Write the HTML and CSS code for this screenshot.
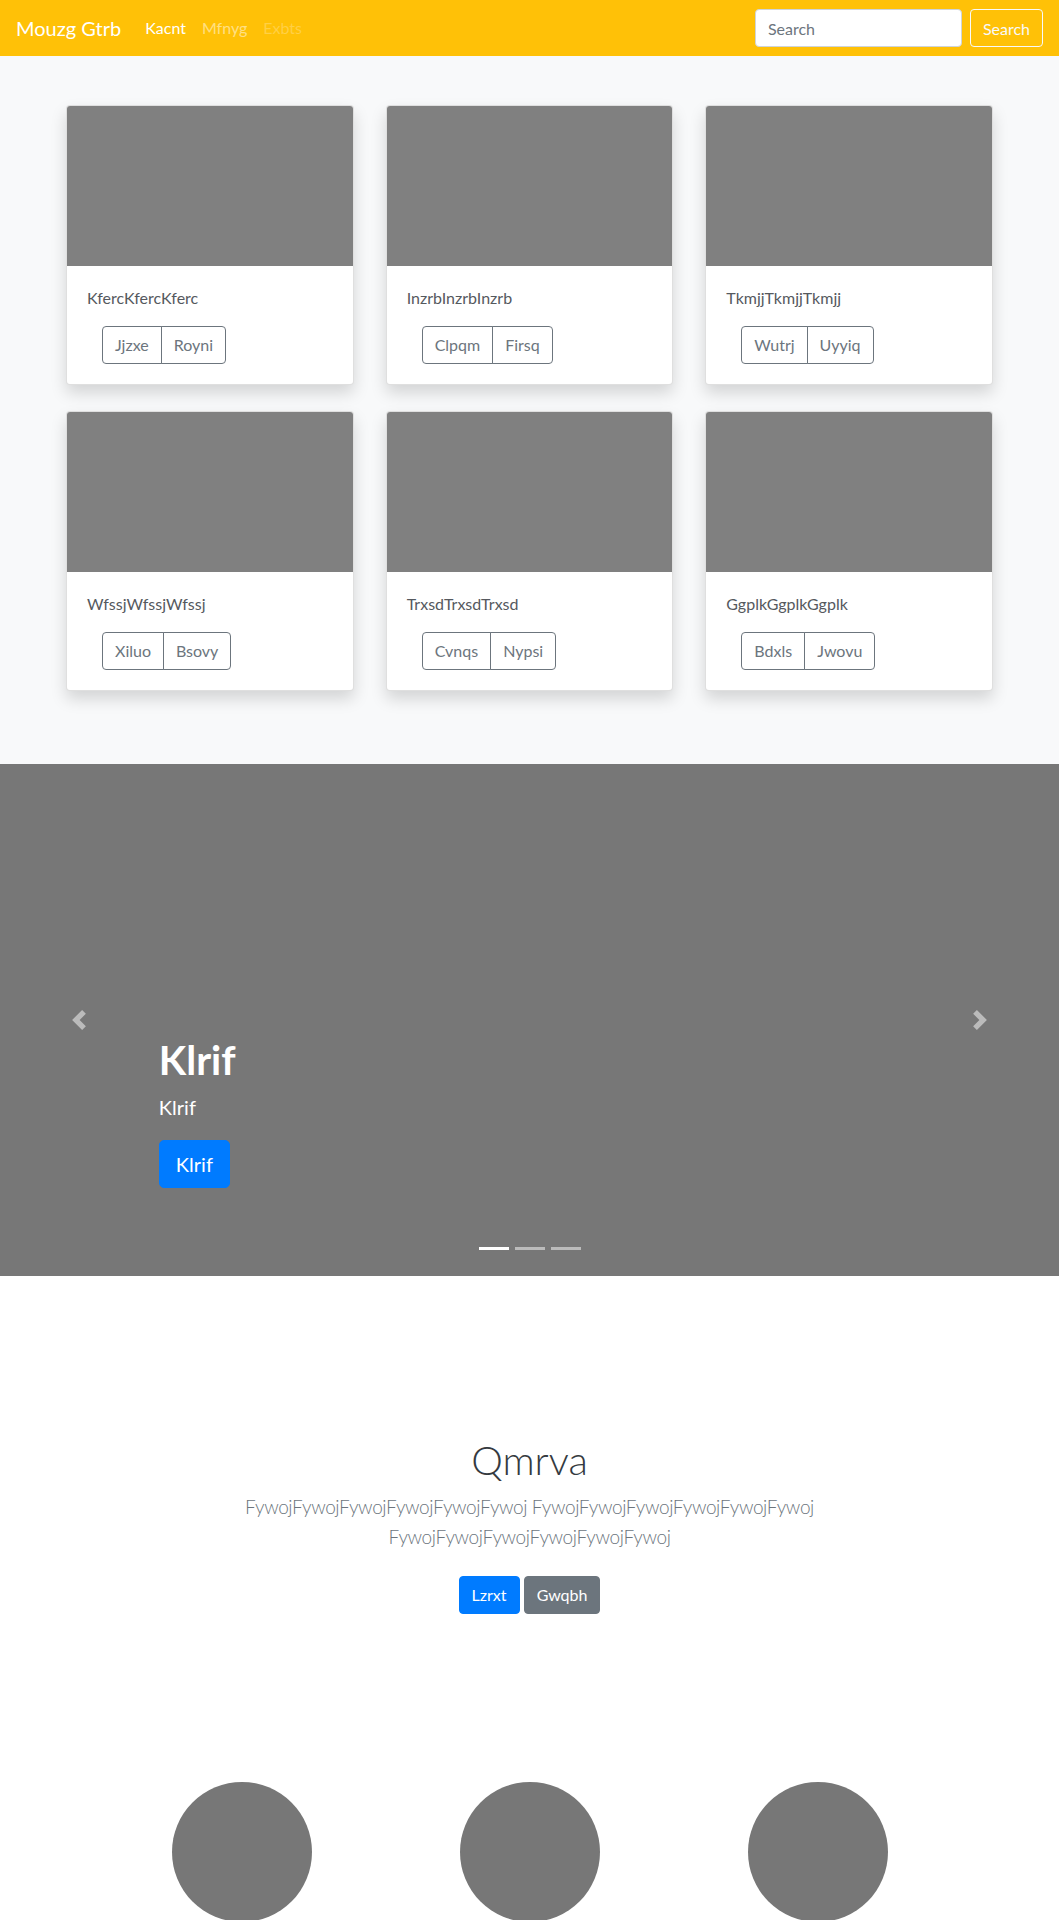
FILE: index.html
```html
<!DOCTYPE html>
<html lang="en">
<head>
<meta charset="utf-8">
<title>Mouzg Gtrb</title>
<link rel="stylesheet" href="styles.css">
</head>
<body>
<nav class="navbar">
  <a class="brand" href="#">Mouzg Gtrb</a>
  <ul class="nav-links">
    <li><a class="nav-link active" href="#">Kacnt</a></li>
    <li><a class="nav-link" href="#">Mfnyg</a></li>
    <li><a class="nav-link disabled" href="#">Exbts</a></li>
  </ul>
  <form class="search-form">
    <input class="search-input" type="text" placeholder="Search">
    <button class="btn-outline-light" type="button">Search</button>
  </form>
</nav>

<section class="album">
  <div class="card-grid">
    <div class="card">
      <div class="card-img"></div>
      <div class="card-body">
        <p class="card-text">KfercKfercKferc</p>
        <div class="btn-group"><button class="btn-outline">Jjzxe</button><button class="btn-outline">Royni</button></div>
      </div>
    </div>
    <div class="card">
      <div class="card-img"></div>
      <div class="card-body">
        <p class="card-text">InzrbInzrbInzrb</p>
        <div class="btn-group"><button class="btn-outline">Clpqm</button><button class="btn-outline">Firsq</button></div>
      </div>
    </div>
    <div class="card">
      <div class="card-img"></div>
      <div class="card-body">
        <p class="card-text">TkmjjTkmjjTkmjj</p>
        <div class="btn-group"><button class="btn-outline">Wutrj</button><button class="btn-outline">Uyyiq</button></div>
      </div>
    </div>
    <div class="card">
      <div class="card-img"></div>
      <div class="card-body">
        <p class="card-text">WfssjWfssjWfssj</p>
        <div class="btn-group"><button class="btn-outline">Xiluo</button><button class="btn-outline">Bsovy</button></div>
      </div>
    </div>
    <div class="card">
      <div class="card-img"></div>
      <div class="card-body">
        <p class="card-text">TrxsdTrxsdTrxsd</p>
        <div class="btn-group"><button class="btn-outline">Cvnqs</button><button class="btn-outline">Nypsi</button></div>
      </div>
    </div>
    <div class="card">
      <div class="card-img"></div>
      <div class="card-body">
        <p class="card-text">GgplkGgplkGgplk</p>
        <div class="btn-group"><button class="btn-outline">Bdxls</button><button class="btn-outline">Jwovu</button></div>
      </div>
    </div>
  </div>
</section>

<section class="carousel">
  <div class="caption">
    <h1 class="caption-title">Klrif</h1>
    <p class="caption-text">Klrif</p>
    <p class="caption-action"><a class="btn-primary-lg" href="#">Klrif</a></p>
  </div>
  <a class="control control-prev" href="#">
    <svg class="control-icon" viewBox="0 0 8 8" width="20" height="20"><path d="M5.25 0l-4 4 4 4 1.5-1.5-2.5-2.5 2.5-2.5-1.5-1.5z"/></svg>
  </a>
  <a class="control control-next" href="#">
    <svg class="control-icon" viewBox="0 0 8 8" width="20" height="20"><path d="M2.75 0l-1.5 1.5 2.5 2.5-2.5 2.5 1.5 1.5 4-4-4-4z"/></svg>
  </a>
  <ol class="indicators">
    <li class="indicator active"></li>
    <li class="indicator"></li>
    <li class="indicator"></li>
  </ol>
</section>

<section class="jumbotron">
  <h1 class="jumbo-title">Qmrva</h1>
  <p class="lead">FywojFywojFywojFywojFywojFywoj FywojFywojFywojFywojFywojFywoj FywojFywojFywojFywojFywojFywoj</p>
  <p class="jumbo-actions">
    <a class="btn btn-primary" href="#">Lzrxt</a>
    <a class="btn btn-secondary" href="#">Gwqbh</a>
  </p>
</section>

<section class="marketing">
  <div class="marketing-col"><div class="circle"></div></div>
  <div class="marketing-col"><div class="circle"></div></div>
  <div class="marketing-col"><div class="circle"></div></div>
</section>
</body>
</html>
```

FILE: styles.css
```css
* {
  box-sizing: border-box;
}

html, body {
  margin: 0;
  padding: 0;
}

body {
  font-family: "Lato", "Open Sans", "Liberation Sans", sans-serif;
  font-size: 16px;
  line-height: 1.5;
  color: #212529;
  background: #fff;
}

a {
  text-decoration: none;
}

/* Navbar */
.navbar {
  display: flex;
  align-items: center;
  height: 56px;
  padding: 0 16px;
  background: #ffc107;
}

.brand {
  font-size: 20px;
  line-height: 30px;
  color: #fff;
  margin-right: 16px;
}

.nav-links {
  display: flex;
  list-style: none;
  margin: 0;
  padding: 0;
}

.nav-link {
  display: block;
  padding: 8px 8px;
  color: rgba(255, 255, 255, 0.5);
}

.nav-link.active {
  color: #fff;
}

.nav-link.disabled {
  color: rgba(255, 255, 255, 0.25);
}

.search-form {
  margin-left: auto;
  display: flex;
  align-items: center;
  gap: 8px;
}

.search-input {
  width: 207px;
  height: 38px;
  padding: 6px 12px;
  font-family: inherit;
  font-size: 16px;
  color: #495057;
  background: #fff;
  border: 1px solid #ced4da;
  border-radius: 4px;
}

.search-input::placeholder {
  color: #6c757d;
}

.btn-outline-light {
  height: 38px;
  padding: 6px 12px;
  font-family: inherit;
  font-size: 16px;
  color: #f8f9fa;
  background: transparent;
  border: 1px solid #f8f9fa;
  border-radius: 4px;
}

/* Album */
.album {
  background: #f8f9fa;
  padding: 49px 0 73px;
}

.card-grid {
  width: 927px;
  margin: 0 auto;
  display: grid;
  grid-template-columns: repeat(3, 1fr);
  column-gap: 32px;
  row-gap: 26px;
}

.card {
  background: #fff;
  border: 1px solid rgba(0, 0, 0, 0.125);
  border-radius: 4px;
  overflow: hidden;
  box-shadow: 0 8px 16px rgba(0, 0, 0, 0.15);
}

.card-img {
  height: 160px;
  background: #808080;
}

.card-body {
  padding: 20px;
}

.card-text {
  margin: 0 0 16px;
  color: #55595e;
}

.btn-group {
  display: inline-flex;
  margin-left: 15px;
}

.btn-outline {
  height: 38px;
  padding: 6px 12px;
  font-family: inherit;
  font-size: 16px;
  line-height: 24px;
  color: #6c757d;
  background: transparent;
  border: 1px solid #6c757d;
}

.btn-outline:first-child {
  border-radius: 4px 0 0 4px;
}

.btn-outline:last-child {
  border-radius: 0 4px 4px 0;
  margin-left: -1px;
}

/* Carousel */
.carousel {
  position: relative;
  height: 512px;
  background: #777;
  display: flex;
  align-items: flex-end;
  padding: 0 15% 88px;
  color: #fff;
}

.caption-title {
  margin: 0 0 8px;
  font-size: 40px;
  line-height: 48px;
  font-weight: 700;
}

.caption-text {
  margin: 0 0 18px;
  font-size: 20px;
  line-height: 30px;
}

.caption-action {
  margin: 0;
}

.btn-primary-lg {
  display: inline-block;
  padding: 8px 16px;
  font-size: 20px;
  line-height: 30px;
  color: #fff;
  background: #007bff;
  border: 1px solid #007bff;
  border-radius: 5px;
}

.control {
  position: absolute;
  top: 0;
  bottom: 0;
  width: 15%;
  display: flex;
  align-items: center;
  justify-content: center;
}

.control-prev {
  left: 0;
}

.control-next {
  right: 0;
}

.control-icon {
  fill: #fff;
  opacity: 0.5;
}

.indicators {
  position: absolute;
  left: 0;
  right: 0;
  bottom: 26px;
  margin: 0;
  padding: 0;
  list-style: none;
  display: flex;
  justify-content: center;
  gap: 6px;
}

.indicator {
  width: 30px;
  height: 3px;
  background: rgba(255, 255, 255, 0.5);
}

.indicator.active {
  background: #fff;
}

/* Jumbotron */
.jumbotron {
  text-align: center;
  padding: 160px 16px 127px;
}

.jumbo-title {
  margin: 0 0 8px;
  font-size: 40px;
  line-height: 48px;
  font-weight: 300;
  color: #343a40;
}

.lead {
  max-width: 720px;
  margin: 0 auto 16px;
  font-size: 19px;
  line-height: 30px;
  letter-spacing: -0.4px;
  font-weight: 300;
  color: #6c757d;
}

.jumbo-actions {
  margin: 0;
}

.btn {
  display: inline-block;
  margin: 8px 0;
  padding: 6px 12px;
  font-size: 16px;
  line-height: 24px;
  color: #fff;
  border-radius: 4px;
}

.btn-primary {
  background: #007bff;
  border: 1px solid #007bff;
}

.btn-secondary {
  background: #6c757d;
  border: 1px solid #6c757d;
}

/* Marketing */
.marketing {
  width: 864px;
  margin: 33px auto 0;
  display: grid;
  grid-template-columns: repeat(3, 1fr);
  padding-bottom: 48px;
}

.marketing-col {
  display: flex;
  justify-content: center;
}

.circle {
  width: 140px;
  height: 140px;
  border-radius: 50%;
  background: #777;
}
```
